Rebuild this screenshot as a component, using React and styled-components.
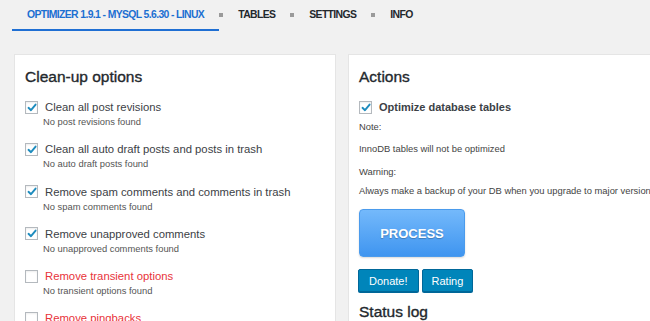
import styled, { createGlobalStyle } from 'styled-components';

const GlobalStyle = createGlobalStyle`
  html, body {
    margin: 0;
    padding: 0;
    background: #f1f1f1;
    overflow: hidden;
  }
  body {
    font-family: "Liberation Sans", Arial, sans-serif;
    color: #444;
  }
`;

const Page = styled.div`
  width: 650px;
  height: 321px;
  overflow: hidden;
  padding-left: 12px;
  box-sizing: border-box;
`;

const Nav = styled.nav`
  display: flex;
  align-items: center;
  height: 31px;
`;

const NavItem = styled.a`
  display: flex;
  align-items: center;
  height: 29px;
  padding: 0 15px;
  border-bottom: 2px solid ${p => (p.$active ? '#1f6fd3' : 'transparent')};
  font-family: "Liberation Sans", Arial, sans-serif;
  font-weight: 700;
  font-size: 10.4px;
  letter-spacing: -0.62px;
  color: ${p => (p.$active ? '#1b6fd1' : '#23282d')};
  text-decoration: none;
  white-space: nowrap;
`;

const Sep = styled.span`
  width: 4px;
  height: 4px;
  background: #9a9a9a;
  margin-bottom: 2px;
`;

const Panels = styled.div`
  display: grid;
  grid-template-columns: 322px 340px;
  gap: 12px;
  margin-top: 23px;
  margin-left: 2px;
`;

const Panel = styled.section`
  background: #fff;
  border: 1px solid #e5e5e5;
  padding: 12px 10px 0;
  height: 280px;
  box-sizing: border-box;
  overflow: hidden;
`;

const Heading = styled.h2`
  margin: ${p => p.$mt || 0}px 0 ${p => p.$mb || 12}px;
  font-size: 15.5px;
  line-height: 20px;
  font-weight: 400;
  -webkit-text-stroke: 0.35px #23282d;
  color: #23282d;
`;

const Option = styled.div`
  margin-bottom: 12.25px;
`;

const CheckRow = styled.label`
  display: flex;
  align-items: center;
  gap: 7px;
  height: 16px;
  font-size: ${p => (p.$bold ? 11 : 11.3)}px;
  font-weight: ${p => (p.$bold ? 700 : 400)};
  color: ${p => (p.$danger ? '#e8333a' : '#3c4146')};
  white-space: nowrap;
`;

const Box = styled.span`
  flex: none;
  width: 11px;
  height: 11px;
  border: 1px solid #b4b9be;
  background: #fff;
  box-shadow: inset 0 1px 2px rgba(0, 0, 0, 0.07);
  display: flex;
  align-items: center;
  justify-content: center;
`;

const Sub = styled.div`
  font-size: 9.4px;
  line-height: 14px;
  color: #555;
  padding-left: 18px;
  white-space: nowrap;
`;

const Note = styled.div`
  font-size: 9.4px;
  line-height: 14px;
  color: #444;
  white-space: nowrap;
  margin-top: ${p => p.$mt || 0}px;
`;

const ProcessButton = styled.button`
  display: block;
  width: 106px;
  height: 48px;
  margin-top: 11px;
  border: 1px solid #4b9bec;
  border-radius: 4px;
  background: linear-gradient(#74b9fb, #3f95f0);
  color: #fff;
  font-family: "Liberation Sans", Arial, sans-serif;
  font-weight: 700;
  font-size: 13px;
  text-shadow: 0 1px 1px rgba(0, 0, 0, 0.25);
  box-shadow: 0 1px 2px rgba(0, 0, 0, 0.15);
`;

const ButtonRow = styled.div`
  display: flex;
  gap: 3px;
  margin-top: 12px;
  margin-left: -1px;
`;

const SmallButton = styled.button`
  height: 23px;
  padding: 0 ${p => p.$pad || 9}px;
  border: 1px solid #006799;
  border-radius: 2px;
  background: #0085ba;
  color: #fff;
  font-family: "Liberation Sans", Arial, sans-serif;
  font-size: 11px;
  box-shadow: 0 1px 0 #006799;
`;

const Check = () => (
  <svg width="10" height="9" viewBox="0 0 10 9">
    <path d="M1.5 4.8 L4 7.2 L8.6 1.6" fill="none" stroke="#1e8cbe" strokeWidth="1.9" strokeLinecap="round" strokeLinejoin="round" />
  </svg>
);

const options = [
  { label: 'Clean all post revisions', sub: 'No post revisions found', checked: true },
  { label: 'Clean all auto draft posts and posts in trash', sub: 'No auto draft posts found', checked: true },
  { label: 'Remove spam comments and comments in trash', sub: 'No spam comments found', checked: true },
  { label: 'Remove unapproved comments', sub: 'No unapproved comments found', checked: true },
  { label: 'Remove transient options', sub: 'No transient options found', danger: true },
  { label: 'Remove pingbacks', sub: 'No pingbacks found', danger: true },
];

export default function App() {
  return (
    <>
      <GlobalStyle />
      <Page>
        <Nav>
          <NavItem $active>OPTIMIZER 1.9.1 - MYSQL 5.6.30 - LINUX</NavItem>
          <Sep />
          <NavItem>TABLES</NavItem>
          <Sep />
          <NavItem>SETTINGS</NavItem>
          <Sep />
          <NavItem>INFO</NavItem>
        </Nav>
        <Panels>
          <Panel>
            <Heading>Clean-up options</Heading>
            {options.map(o => (
              <Option key={o.label}>
                <CheckRow $danger={o.danger}>
                  <Box>{o.checked && <Check />}</Box>
                  {o.label}
                </CheckRow>
                <Sub>{o.sub}</Sub>
              </Option>
            ))}
          </Panel>
          <Panel>
            <Heading>Actions</Heading>
            <CheckRow $bold>
              <Box><Check /></Box>
              Optimize database tables
            </CheckRow>
            <Note $mt={5}>Note:</Note>
            <Note $mt={8}>InnoDB tables will not be optimized</Note>
            <Note $mt={9}>Warning:</Note>
            <Note $mt={5}>Always make a backup of your DB when you upgrade to major versions</Note>
            <ProcessButton>PROCESS</ProcessButton>
            <ButtonRow>
              <SmallButton $pad={10}>Donate!</SmallButton>
              <SmallButton $pad={9}>Rating</SmallButton>
            </ButtonRow>
            <Heading $mt={10}>Status log</Heading>
          </Panel>
        </Panels>
      </Page>
    </>
  );
}
